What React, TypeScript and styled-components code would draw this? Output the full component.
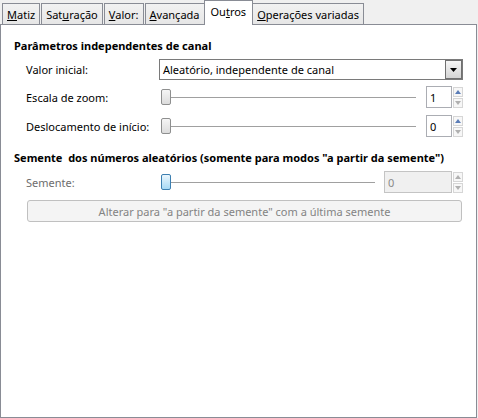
import React from 'react'
import styled, { createGlobalStyle, css } from 'styled-components'

const GlobalStyle = createGlobalStyle`
  html, body {
    margin: 0;
    padding: 0;
    background: #f0f0f0;
  }
  body {
    font-family: "Noto Sans", "DejaVu Sans", sans-serif;
    font-size: 11px;
    color: #000;
  }
`

const Window = styled.div`
  width: 478px;
  height: 418px;
  background: #f0f0f0;
  display: flex;
  flex-direction: column;
`

const TabBar = styled.div`
  display: flex;
  align-items: flex-end;
  height: 24px;
  padding-left: 2px;
`

const Tab = styled.div<{ $active?: boolean }>`
  box-sizing: border-box;
  height: 21px;
  padding: 0 4px;
  margin-right: 1px;
  display: flex;
  align-items: center;
  border: 1px solid #898c95;
  border-bottom: none;
  background: linear-gradient(#f2f2f2, #e6e6e6);
  white-space: nowrap;
  ${(p) =>
    p.$active &&
    css`
      position: relative;
      z-index: 1;
      height: 25px;
      margin: 0 -1px -1px -2px;
      padding: 3px 6px 0 6px;
      background: #fff;
      align-items: flex-start;
    `}
`

const Key = styled.span`
  text-decoration: underline;
`

const Panel = styled.div`
  flex: 1;
  box-sizing: border-box;
  margin-right: 1px;
  border: 1px solid #898c95;
  background: #fff;
  padding: 13px 13px 0 13px;
  display: flex;
  flex-direction: column;
`

const SectionTitle = styled.div<{ $top?: number }>`
  font-weight: bold;
  height: 16px;
  line-height: 16px;
  white-space: nowrap;
  margin-top: ${(p) => p.$top ?? 0}px;
`

const Row = styled.div<{ $top: number }>`
  display: grid;
  grid-template-columns: 133px 1fr;
  align-items: center;
  margin-left: 12px;
  margin-top: ${(p) => p.$top}px;
`

const Label = styled.span<{ $disabled?: boolean }>`
  color: ${(p) => (p.$disabled ? '#6d6d6d' : '#000')};
  white-space: nowrap;
`

const Select = styled.div`
  box-sizing: border-box;
  height: 21px;
  display: flex;
  align-items: center;
  border: 1px solid #7a7a7a;
  padding-left: 3px;
  background: #fff;
`

const SelectText = styled.span`
  flex: 1;
`

const SelectButton = styled.div`
  box-sizing: border-box;
  width: 17px;
  height: 19px;
  border: 1px solid #707070;
  background: linear-gradient(#f6f6f6, #d4d4d4);
  display: flex;
  align-items: center;
  justify-content: center;
`

const SliderLine = styled.div`
  flex: 1;
  display: flex;
  align-items: center;
  padding-left: 2px;
`

const Handle = styled.div<{ $focus?: boolean }>`
  box-sizing: border-box;
  width: 10px;
  height: 16px;
  border-radius: 2px;
  border: 1px solid ${(p) => (p.$focus ? '#3c7fb1' : '#8e8f8f')};
  background: ${(p) =>
    p.$focus ? 'linear-gradient(#eaf6fd, #a7d9f5)' : 'linear-gradient(#f5f5f5, #dcdcdc)'};
`

const Track = styled.div`
  flex: 1;
  height: 1px;
  background: #a0a0a0;
`

const SliderRow = styled.div`
  display: flex;
  align-items: center;
`

const SpinBox = styled.div<{ $width: number; $disabled?: boolean }>`
  box-sizing: border-box;
  width: ${(p) => p.$width}px;
  height: 22px;
  margin-left: ${(p) => (p.$disabled ? 9 : 10)}px;
  border: 1px solid ${(p) => (p.$disabled ? '#c4c4c4' : '#abadb3')};
  background: ${(p) => (p.$disabled ? '#f0f0f0' : '#fff')};
  color: ${(p) => (p.$disabled ? '#8a8a8a' : '#000')};
  padding-left: 3px;
  display: flex;
  align-items: center;
`

const Arrows = styled.div`
  width: 10px;
  height: 21px;
  margin-left: 1px;
  display: flex;
  flex-direction: column;
  justify-content: space-between;
`

const ArrowBtn = styled.div`
  box-sizing: border-box;
  height: 10px;
  border: 1px solid #d6d6d6;
  background: #f7f7f7;
  display: flex;
  align-items: center;
  justify-content: center;
`

const WideButton = styled.div`
  box-sizing: border-box;
  height: 22px;
  margin: 7px 1px 0 13px;
  border: 1px solid #c0c0c0;
  border-radius: 3px;
  background: #f4f4f4;
  color: #838383;
  display: flex;
  align-items: center;
  justify-content: center;
`

const Triangle = ({ up, color }: { up?: boolean; color: string }) => (
  <svg width="6" height="4" viewBox="0 0 6 4">
    <path d={up ? 'M0 4 L3 0 L6 4 Z' : 'M0 0 L3 4 L6 0 Z'} fill={color} />
  </svg>
)

const Spinner = ({ value, width, disabled }: { value: string; width: number; disabled?: boolean }) => (
  <>
    <SpinBox $width={width} $disabled={disabled}>{value}</SpinBox>
    <Arrows>
      <ArrowBtn>
        <Triangle up color={disabled ? '#b0b0b0' : '#5b7db8'} />
      </ArrowBtn>
      <ArrowBtn>
        <Triangle color="#b0b0b0" />
      </ArrowBtn>
    </Arrows>
  </>
)

const Slider = ({ value, width, disabled, focus }: { value: string; width: number; disabled?: boolean; focus?: boolean }) => (
  <SliderRow>
    <SliderLine>
      <Handle $focus={focus} />
      <Track />
    </SliderLine>
    <Spinner value={value} width={width} disabled={disabled} />
  </SliderRow>
)

export default function App() {
  return (
    <>
      <GlobalStyle />
      <Window>
        <TabBar>
          <Tab><Key>M</Key>atiz</Tab>
          <Tab>Sat<Key>u</Key>ração</Tab>
          <Tab><Key>V</Key>alor:</Tab>
          <Tab><Key>A</Key>vançada</Tab>
          <Tab $active>Ou<Key>t</Key>ros</Tab>
          <Tab><Key>O</Key>perações variadas</Tab>
        </TabBar>
        <Panel>
          <SectionTitle>Parâmetros independentes de canal</SectionTitle>
          <Row $top={5}>
            <Label>Valor inicial:</Label>
            <Select>
              <SelectText>Aleatório, independente de canal</SelectText>
              <SelectButton>
                <svg width="7" height="4" viewBox="0 0 7 4">
                  <path d="M0 0 L7 0 L3.5 4 Z" fill="#000" />
                </svg>
              </SelectButton>
            </Select>
          </Row>
          <Row $top={6}>
            <Label>Escala de zoom:</Label>
            <Slider value="1" width={26} />
          </Row>
          <Row $top={7}>
            <Label>Deslocamento de início:</Label>
            <Slider value="0" width={26} />
          </Row>
          <SectionTitle $top={13}>
            Semente&nbsp; dos números aleatórios (somente para modos "a partir da semente")
          </SectionTitle>
          <Row $top={5}>
            <Label $disabled>Semente:</Label>
            <Slider value="0" width={68} disabled focus />
          </Row>
          <WideButton>Alterar para "a partir da semente" com a última semente</WideButton>
        </Panel>
      </Window>
    </>
  )
}
